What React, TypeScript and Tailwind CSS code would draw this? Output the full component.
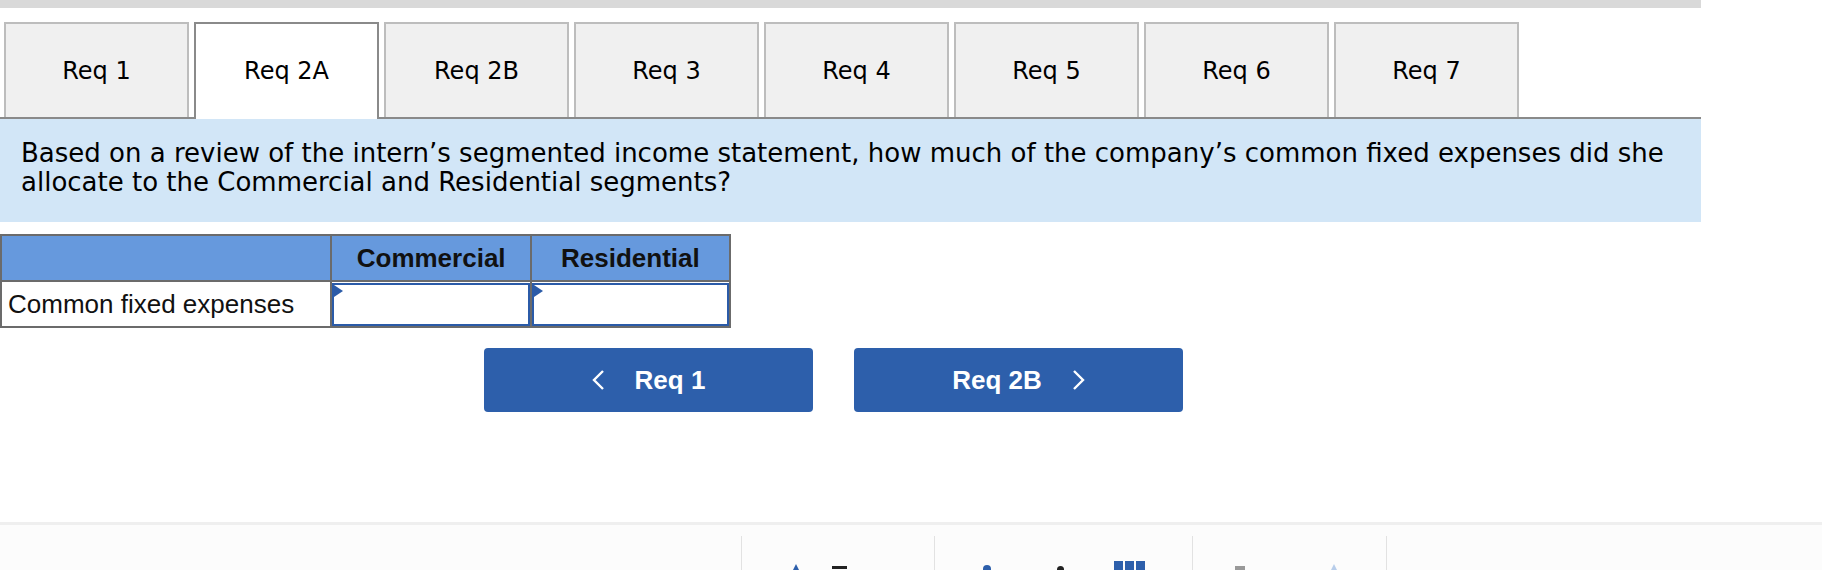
import React from 'react';

const tabs = ['Req 1', 'Req 2A', 'Req 2B', 'Req 3', 'Req 4', 'Req 5', 'Req 6', 'Req 7'];
const activeTab = 'Req 2A';

const dejavu = { fontFamily: '"DejaVu Sans", Verdana, sans-serif' };
const arial = { fontFamily: '"Liberation Sans", Arial, sans-serif' };

function Tabs() {
  return (
    <div className="flex items-start gap-[5px] pl-[4px] pt-[14px] border-b-2 border-[#8a8a8a]" style={dejavu}>
      {tabs.map((t) =>
        t === activeTab ? (
          <div
            key={t}
            className="relative w-[185px] h-[97px] -mb-[2px] pb-[2px] flex items-center justify-center text-[24px] text-black bg-white border-2 border-b-0 border-[#8a8a8a]"
          >
            {t}
          </div>
        ) : (
          <div
            key={t}
            className="w-[185px] h-[95px] flex items-center justify-center text-[24px] text-black bg-[#f0f0f0] border-2 border-b-0 border-[#bdbdbd]"
          >
            {t}
          </div>
        )
      )}
    </div>
  );
}

function InputCell() {
  return (
    <td className="p-0 border-2 border-[#6b6b6b] h-[46px]">
      <div className="relative h-[43px] border-2 border-[#2b5ba8] bg-white">
        <span className="absolute left-0 top-0 w-0 h-0 border-y-[6px] border-y-transparent border-l-[9px] border-l-[#2b5ba8]" />
      </div>
    </td>
  );
}

export default function App() {
  return (
    <div className="w-[1822px] h-[570px] bg-white overflow-hidden flex flex-col">
      <div className="w-[1701px]">
        <div className="h-[8px] bg-[#d9d9d9]" />
        <Tabs />
        <div
          className="bg-[#d2e6f7] px-[21px] pt-[20px] pb-[25px] text-[26px] leading-[29px] text-black"
          style={dejavu}
        >
          <div className="whitespace-nowrap">
            Based on a review of the intern’s segmented income statement, how much of the company’s common fixed expenses did she
          </div>
          <div className="whitespace-nowrap">allocate to the Commercial and Residential segments?</div>
        </div>
      </div>

      <table className="mt-[12px] border-collapse border-2 border-[#6b6b6b] w-[731px]" style={arial}>
        <thead>
          <tr className="bg-[#6699dd] h-[46px]">
            <th className="w-[331px] border-2 border-[#6b6b6b]" />
            <th className="w-[200px] border-2 border-[#6b6b6b] text-[26px] font-bold text-[#111]">Commercial</th>
            <th className="w-[200px] border-2 border-[#6b6b6b] text-[26px] font-bold text-[#111]">Residential</th>
          </tr>
        </thead>
        <tbody>
          <tr>
            <td className="border-2 border-[#6b6b6b] text-left pl-[6px] text-[26px] text-[#111] whitespace-nowrap">
              Common fixed expenses
            </td>
            <InputCell />
            <InputCell />
          </tr>
        </tbody>
      </table>

      <div className="flex gap-[41px] pl-[484px] mt-[20px]" style={arial}>
        <button className="w-[329px] h-[64px] rounded-[4px] bg-[#2d5fab] text-white font-bold text-[26px] flex items-center justify-center gap-[30px]">
          <svg width="13" height="20" viewBox="0 0 13 20" fill="none" stroke="white" strokeWidth="2.4">
            <path d="M11 1 L2 10 L11 19" />
          </svg>
          <span>Req 1</span>
        </button>
        <button className="w-[329px] h-[64px] rounded-[4px] bg-[#2d5fab] text-white font-bold text-[26px] flex items-center justify-center gap-[30px]">
          <span>Req 2B</span>
          <svg width="13" height="20" viewBox="0 0 13 20" fill="none" stroke="white" strokeWidth="2.4">
            <path d="M2 1 L11 10 L2 19" />
          </svg>
        </button>
      </div>

      <div className="mt-[110px] border-t-[3px] border-[#efefef] bg-[#fcfcfc] flex-1 flex pl-[741px]">
        <div className="w-[194px] border-l border-r border-[#e2e2e2] mt-[11px] relative">
          <span className="absolute left-[50px] top-[28px] w-0 h-0 border-x-[4px] border-x-transparent border-b-[8px] border-b-[#2d5fab]" />
          <span className="absolute left-[90px] top-[30px] w-[15px] h-[3px] bg-[#222]" />
        </div>
        <div className="w-[258px] border-r border-[#e2e2e2] mt-[11px] relative">
          <span className="absolute left-[48px] top-[29px] w-[8px] h-[5px] rounded-t-full bg-[#2d5fab]" />
          <span className="absolute left-[122px] top-[30px] w-[7px] h-[4px] rounded-t-full bg-[#222]" />
          <span className="absolute left-[179px] top-[25px] flex gap-[2px]">
            <span className="w-[9px] h-[9px] bg-[#2d5fab]" />
            <span className="w-[9px] h-[9px] bg-[#2d5fab]" />
            <span className="w-[9px] h-[9px] bg-[#2d5fab]" />
          </span>
        </div>
        <div className="w-[194px] border-r border-[#e2e2e2] mt-[11px] relative">
          <span className="absolute left-[42px] top-[30px] w-[10px] h-[4px] bg-[#999]" />
          <span className="absolute left-[137px] top-[28px] w-0 h-0 border-x-[4px] border-x-transparent border-b-[8px] border-b-[#b8cdea]" />
        </div>
      </div>
    </div>
  );
}
